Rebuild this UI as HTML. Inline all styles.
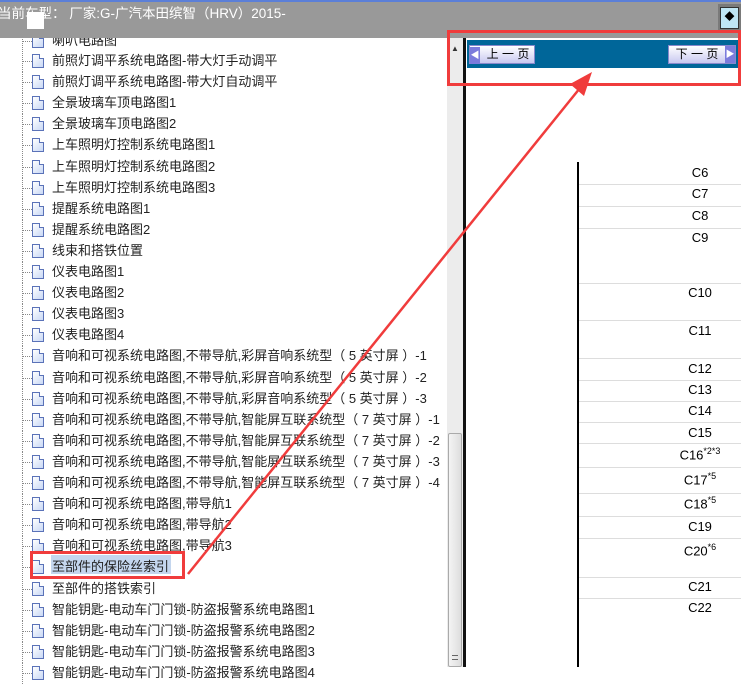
<!DOCTYPE html>
<html><head><meta charset="utf-8"><style>
*{margin:0;padding:0;box-sizing:border-box}
body{width:741px;height:667px;overflow:hidden;background:#fff;position:relative;font-family:"Liberation Sans","Noto Sans CJK SC",sans-serif}
.hdr{position:absolute;left:0;top:0;width:741px;height:38px;background:#999;border-top:2px solid #5b7fd8;z-index:5}
.title{position:absolute;left:-2px;top:0px;color:#fff;font-size:13.5px;white-space:nowrap}
.sq{position:absolute;left:27px;top:10px;width:17px;height:17px;background:#fff}
.tb{position:absolute;left:718px;top:2px;width:23px;height:28px;background:#7a7a7a;padding:3px 2px}
.tb div{width:100%;height:100%;background:#bfe6f5;border:1px solid #333;font-size:10px;text-align:center;line-height:20px}
.it{position:absolute;left:0;height:21px;width:447px}
.dot{position:absolute;left:22px;top:0;height:21px;border-left:1px dotted #888}
.hd{position:absolute;left:22px;top:10px;width:10px;border-top:1px dotted #888}
.ic{position:absolute;left:32px;top:3px;width:12px;height:14px;border:1px solid #5a72b8;background:linear-gradient(135deg,#fff,#c9d8f5)}
.ic:after{content:"";position:absolute;right:-1px;top:-1px;width:4px;height:4px;background:#fff;border-left:1px solid #5a72b8;border-bottom:1px solid #5a72b8}
.tx{position:absolute;left:52px;top:2px;font-size:13px;color:#222;white-space:nowrap;line-height:16px}
.sb{position:absolute;left:447px;top:38px;width:16px;height:629px;background:#ececec}
.th{position:absolute;left:448px;top:433px;width:14px;height:234px;background:linear-gradient(90deg,#f4f4f4,#ddd);border:1px solid #aaa;border-radius:2px}
.vl{position:absolute;left:463px;top:38px;width:3px;height:629px;background:#111}
.bar{position:absolute;left:467px;top:40px;width:274px;height:28px;background:#006699}
.btn{position:absolute;top:45px;height:19px;background:linear-gradient(#fff,#c8c8f0);border:1px solid #8888cc;font-size:12px;line-height:17px;color:#000}
.tl{position:absolute;left:577px;top:162px;width:2px;height:505px;background:#000}
.row{position:absolute;left:579px;width:162px;border-top:1px solid #ddd}
.c{position:absolute;left:640px;width:120px;text-align:center;font-size:13px;color:#000}
.c sup{font-size:9px}
</style></head><body>
<div class="hdr"><div class="title">当前车型： 厂家:G-广汽本田缤智（HRV）2015-</div><div class="sq"></div><div class="tb"><div>◆</div></div></div>
<div class="it" style="top:31px"><div class="dot"></div><div class="hd"></div><div class="ic"></div><div class="tx">喇叭电路图</div></div>
<div id="list"></div>
<div class="sb"></div><div class="th"><div style="position:absolute;left:3px;bottom:6px;width:6px;height:5px;border-top:1px solid #666;border-bottom:1px solid #666"></div></div>
<div style="position:absolute;left:451px;top:44px;font-size:8px;color:#333">▲</div>
<div class="vl"></div>
<div class="bar"></div>
<div class="btn" style="left:469px;width:66px"><span style="display:inline-block;width:10px;background:#7b7bdc;color:#fff;font-size:9px;text-align:center">◀</span>&nbsp; 上 一 页</div>
<div class="btn" style="left:668px;width:68px">&nbsp; 下 一 页 <span style="float:right;width:10px;background:#7b7bdc;color:#fff;font-size:9px;text-align:center">▶</span></div>
<div class="tl"></div>
<div id="tbl"></div>
<div style="position:absolute;left:447px;top:30px;width:294px;height:56px;border:3px solid #f03c3c;z-index:6"></div>
<div style="position:absolute;left:30px;top:551px;width:155px;height:28px;border:3px solid #f03c3c"></div>
<div style="position:absolute;left:51px;top:555px;width:120px;height:19px;background:#c4d6ee"></div>
<svg style="position:absolute;left:0;top:0;z-index:7" width="741" height="667"><line x1="188" y1="574" x2="580" y2="88" stroke="#f03c3c" stroke-width="2.5"/><polygon points="592,72 570,84 584,96" fill="#f03c3c"/></svg>
<script>
var items=["前照灯调平系统电路图-带大灯手动调平","前照灯调平系统电路图-带大灯自动调平","全景玻璃车顶电路图1","全景玻璃车顶电路图2","上车照明灯控制系统电路图1","上车照明灯控制系统电路图2","上车照明灯控制系统电路图3","提醒系统电路图1","提醒系统电路图2","线束和搭铁位置","仪表电路图1","仪表电路图2","仪表电路图3","仪表电路图4","音响和可视系统电路图,不带导航,彩屏音响系统型（ 5 英寸屏 ）-1","音响和可视系统电路图,不带导航,彩屏音响系统型（ 5 英寸屏 ）-2","音响和可视系统电路图,不带导航,彩屏音响系统型（ 5 英寸屏 ）-3","音响和可视系统电路图,不带导航,智能屏互联系统型（ 7 英寸屏 ）-1","音响和可视系统电路图,不带导航,智能屏互联系统型（ 7 英寸屏 ）-2","音响和可视系统电路图,不带导航,智能屏互联系统型（ 7 英寸屏 ）-3","音响和可视系统电路图,不带导航,智能屏互联系统型（ 7 英寸屏 ）-4","音响和可视系统电路图,带导航1","音响和可视系统电路图,带导航2","音响和可视系统电路图,带导航3","至部件的保险丝索引","至部件的搭铁索引","智能钥匙-电动车门门锁-防盗报警系统电路图1","智能钥匙-电动车门门锁-防盗报警系统电路图2","智能钥匙-电动车门门锁-防盗报警系统电路图3","智能钥匙-电动车门门锁-防盗报警系统电路图4"];
var h="";items.forEach(function(t,i){h+='<div class="it" style="top:'+(51+i*21.1)+'px"><div class="dot"></div><div class="hd"></div><div class="ic"></div><div class="tx"'+(i==24?' style="z-index:2"':'')+'>'+t+'</div></div>';});
document.getElementById("list").innerHTML=h;
var lines=[184,206,228,283,320,358,380,401,422,443,467,493,516,538,577,598];
var cs=[["C6",165],["C7",186],["C8",208],["C9",230],["C10",285],["C11",323],["C12",361],["C13",382],["C14",403],["C15",425],["C16<sup>*2*3</sup>",446],["C17<sup>*5</sup>",471],["C18<sup>*5</sup>",495],["C19",519],["C20<sup>*6</sup>",542],["C21",579],["C22",600]];
var g="";lines.forEach(function(y){g+='<div class="row" style="top:'+y+'px"></div>'});
cs.forEach(function(c){g+='<div class="c" style="top:'+c[1]+'px">'+c[0]+'</div>'});
document.getElementById("tbl").innerHTML=g;
</script>
</body></html>
